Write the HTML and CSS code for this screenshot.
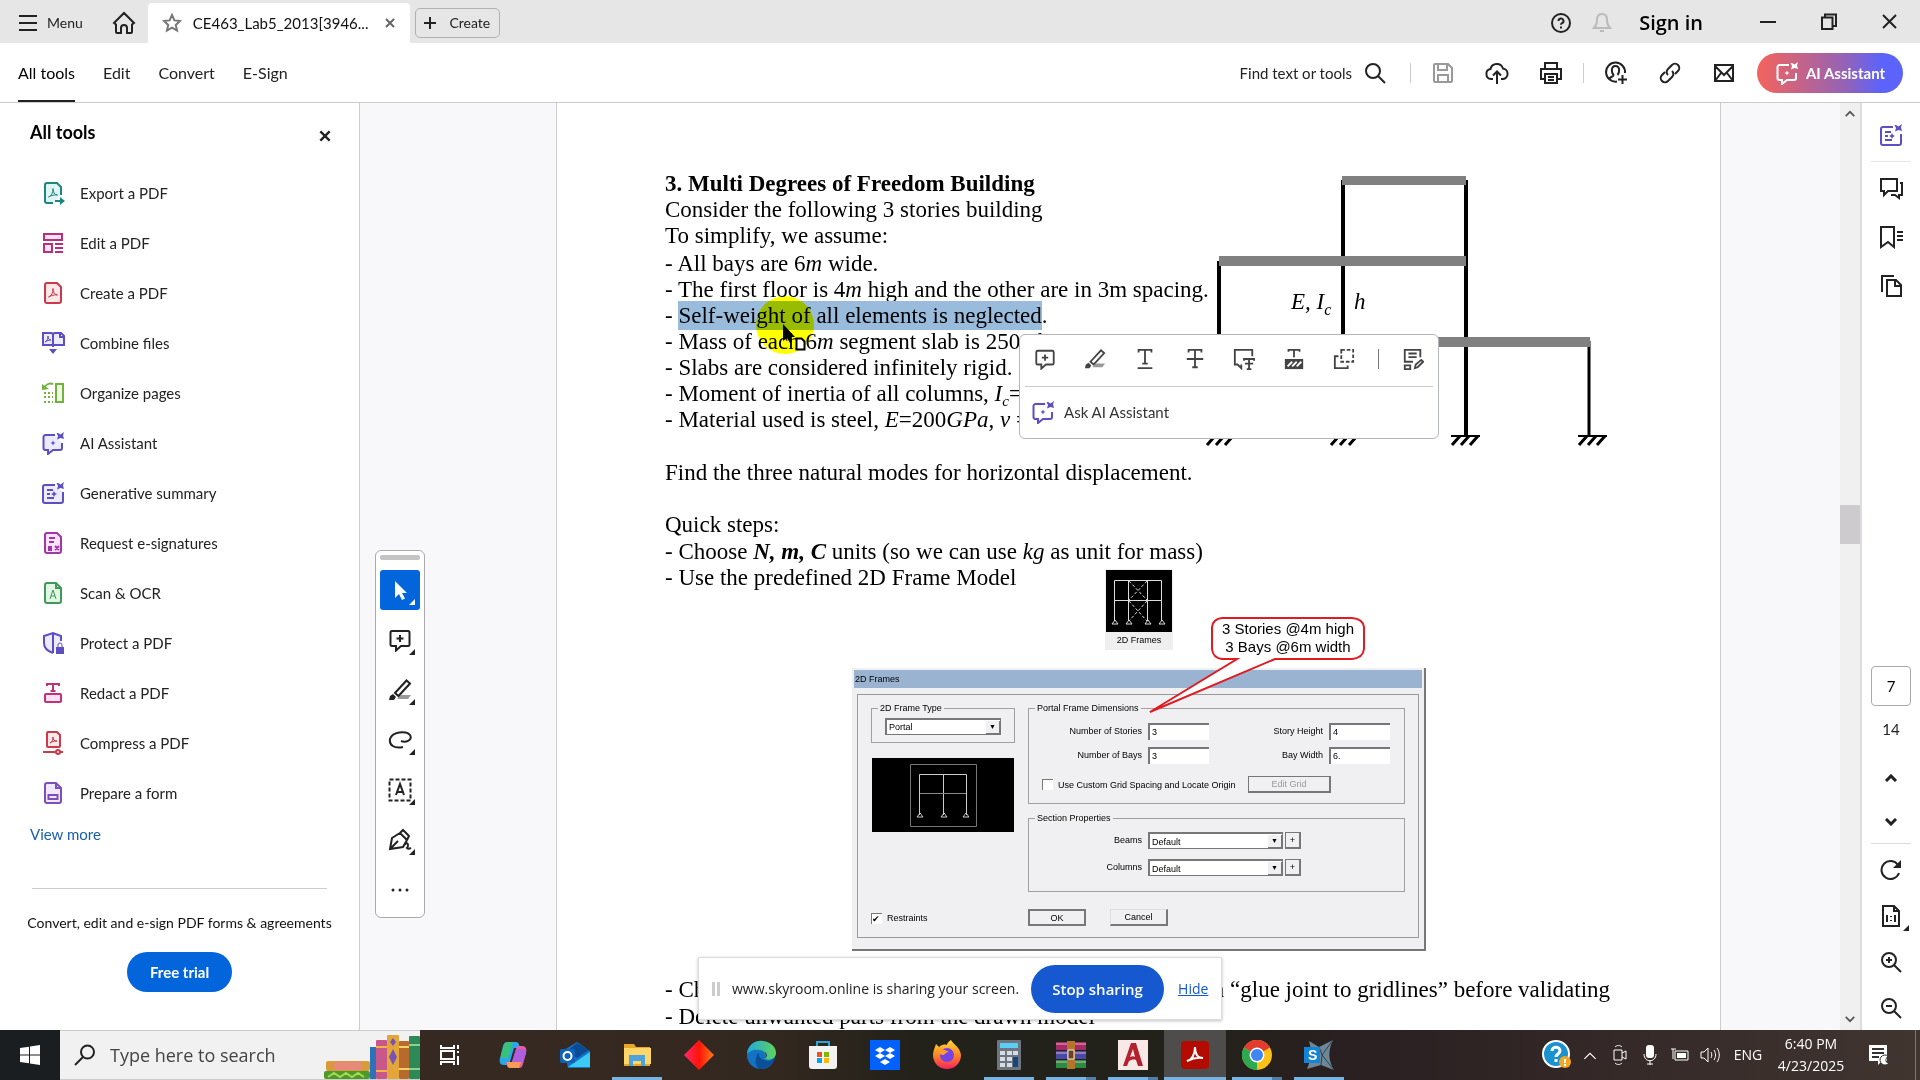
FILE: index.html
```
<!DOCTYPE html>
<html lang="en">
<head>
    <meta charset="UTF-8">
    <meta name="viewport" content="width=device-width, initial-scale=1.0">
    <title>CE463_Lab5_2013</title>
    <link rel="stylesheet" href="styles.css">
</head>
<body>
<!-- Shared icons -->
<svg class="sprite" aria-hidden="true">
    <symbol id="i-ai" viewBox="0 0 24 24"><path d="M14 4H4.500a2 2 0 0 0-2 2v11a2 2 0 0 0 2 2H7v4l5-4h7a2 2 0 0 0 2-2v-5" /><path class="solid" d="m17 2 2.500 1.500L23 1l-1 3.500L23 8l-3.500-1L16 8.500 17 5l-1.500-3zM12 9.500l.8 1.700 1.700.8-1.700.8-.8 1.700-.8-1.700-1.700-.8 1.700-.8z"/></symbol>
    <symbol id="i-summary" viewBox="0 0 24 24"><path d="M14 4H4a2 2 0 0 0-2 2v14a2 2 0 0 0 2 2h16a2 2 0 0 0 2-2v-9M6 9h6M6 13h3M6 17h7"/><path class="solid" d="m17 2 2.500 1.500L23 1l-1 3.500L23 8l-3.500-1L16 8.500 17 5l-1.500-3zM13 10l1 2 2 1-2 1-1 2-1-2-2-1 2-1z"/></symbol>
    <symbol id="i-comment" viewBox="0 0 24 24"><path d="M4 3h16a1.500 1.500 0 0 1 1.500 1.500v12A1.500 1.500 0 0 1 20 18h-7l-5 4.500V18H4a1.500 1.500 0 0 1-1.500-1.500v-12A1.500 1.500 0 0 1 4 3zM12 7v7M8.500 10.500h7"/></symbol>
    <symbol id="i-marker" viewBox="0 0 24 24"><path class="shade" d="M9 21l4-4h10l-3 4z"/><path d="M7 15 18.500 2.500l3.500 3L10.500 18z"/><path class="solid" d="M1 22l1-4 3-2 3 3-2 3z"/></symbol>
    <symbol id="i-pdf" viewBox="0 0 24 24"><path d="M6 2h10l4 4v14a2 2 0 0 1-2 2H6a2 2 0 0 1-2-2V4a2 2 0 0 1 2-2z"/><path class="thin" d="M7.500 16c3-1 4.500-4 4.500-8.500 0 4 1.500 6 4.500 6.500-3-.5-6 .3-9 2z"/></symbol>
    <symbol id="i-x" viewBox="0 0 12 12"><path d="M2 2l8 8M10 2l-8 8"/></symbol>
    <symbol id="i-up" viewBox="0 0 14 8"><path d="M2 7l5-5 5 5"/></symbol>
    <symbol id="i-down" viewBox="0 0 14 8"><path d="M2 1l5 5 5-5"/></symbol>
</svg>

<header class="titlebar">
    <button class="menu-btn"><svg class="ico" viewBox="0 0 20 20"><path d="M1 3h18M1 10h18M1 17h18"/></svg>Menu</button>
    <button class="home-btn" aria-label="Home"><svg class="ico ico-24" viewBox="0 0 24 24"><path d="M2 12 12 2l10 10-2 1.500V21a1 1 0 0 1-1 1h-4v-5a3 3 0 0 0-6 0v5H5a1 1 0 0 1-1-1v-7.500z"/></svg></button>
    <div class="tab">
        <svg class="ico ico-20 star" viewBox="0 0 20 20"><path d="m10 2 2.400 5.400 5.600.6-4.200 3.900 1.200 5.600-5-2.900-5 2.900 1.200-5.600L2 8l5.600-.6z"/></svg>
        <span class="tab-name">CE463_Lab5_2013[3946...</span>
        <button class="tab-close" aria-label="Close tab"><svg class="ico ico-12"><use href="#i-x"/></svg></button>
    </div>
    <button class="create-btn"><svg class="ico ico-12" viewBox="0 0 12 12"><path d="M6 0v12M0 6h12"/></svg>Create</button>
    <div class="title-right">
        <button aria-label="Help"><svg class="ico ico-20" viewBox="0 0 20 20"><circle cx="10" cy="10" r="9"/><path d="M7.500 8a2.500 2.500 0 1 1 3.500 2.200c-.7.300-1 .7-1 1.500M10 13.500v2"/></svg></button>
        <button class="bell" aria-label="Notifications"><svg class="ico ico-20" viewBox="0 0 20 20"><path d="M10 1C6 1 5 4 5 7c0 4-1 6-3 8h16c-2-2-3-4-3-8 0-3-1-6-5-6zM8 18h4"/></svg></button>
        <button class="sign-in">Sign in</button>
        <button class="win" aria-label="Minimize"><svg class="ico ico-18" viewBox="0 0 18 18"><path d="M1 9h16"/></svg></button>
        <button class="win" aria-label="Restore"><svg class="ico ico-18" viewBox="0 0 18 18"><path d="M5 4V1.500h11V13h-3M2 4.500h10.500V16H2z"/></svg></button>
        <button class="win" aria-label="Close"><svg class="ico ico-18" viewBox="0 0 18 18"><path d="M2 2l13 13M15 2 2 15"/></svg></button>
    </div>
</header>

<nav class="toolbar">
    <a class="active" href="#">All tools</a>
    <a href="#">Edit</a>
    <a href="#">Convert</a>
    <a href="#">E-Sign</a>
    <div class="toolbar-right">
        <button class="find-btn">Find text or tools<svg class="ico ico-22" viewBox="0 0 22 22"><circle cx="9" cy="9" r="7"/><path d="m14 14 7 7"/></svg></button>
        <span class="sep"></span>
        <button class="tool muted" aria-label="Save"><svg class="ico ico-22" viewBox="0 0 22 22"><path d="M3 2h13l4 4v13a1 1 0 0 1-1 1H3a1 1 0 0 1-1-1V3a1 1 0 0 1 1-1zM6 2v6h9V2M6 20v-7h10v7"/></svg></button>
        <button class="tool" aria-label="Upload"><svg class="ico ico-24" viewBox="0 0 24 24"><path d="M8 18H6a5 5 0 0 1-.5-9.900A6.500 6.500 0 0 1 18 7.500 5.300 5.300 0 0 1 18 18h-2M12 23V11M8 14.500l4-4 4 4"/></svg></button>
        <button class="tool" aria-label="Print"><svg class="ico ico-24" viewBox="0 0 24 24"><path d="M6 7V2h12v5M6 18H2V8h20v10h-4M6 13h12v9H6zM9 16h6M9 19h6"/></svg></button>
        <span class="sep"></span>
        <button class="tool" aria-label="Share"><svg class="ico ico-24" viewBox="0 0 24 24"><path d="M13 20.500A9.500 9.500 0 1 1 21 12M5.500 18c.5-2.500 4-2 4-4-2-2-3-9 2-9s4 7 2 9M18.500 14v9M14 18.500h9"/></svg></button>
        <button class="tool" aria-label="Copy link"><svg class="ico ico-22" viewBox="0 0 22 22"><path d="M9 13a4 4 0 0 1 0-6l4-4a4 4 0 0 1 6 6l-3 3M13 9a4 4 0 0 1 0 6l-4 4a4 4 0 0 1-6-6l3-3"/></svg></button>
        <button class="tool" aria-label="Email"><svg class="ico ico-22" viewBox="0 0 22 22"><path d="M2 3h18v16H2zM2 4l9 9 9-9M2 19l6-8M20 19l-6-8"/></svg></button>
        <button class="ai-btn"><svg class="ico ico-24"><use href="#i-ai"/></svg>AI Assistant</button>
    </div>
</nav>

<main>
    <aside class="panel">
        <div class="panel-head">
            <h2>All tools</h2>
            <button aria-label="Close panel"><svg class="ico ico-14"><use href="#i-x"/></svg></button>
        </div>
        <ul class="tools">
            <li><a href="#"><svg class="ico ico-24 teal" viewBox="0 0 24 24"><path d="M12 22H6a2 2 0 0 1-2-2V4a2 2 0 0 1 2-2h10l4 4v8M14 20h8"/><path class="solid" d="m19 16 5 4-5 4z"/><path class="thin" d="M7.500 16c3-1 4.500-4 4.500-8.500 0 4 1.500 6 4.500 6.500-3-.5-6 .3-9 2z"/></svg>Export a PDF</a></li>
            <li><a href="#"><svg class="ico ico-24 pink" viewBox="0 0 24 24"><path d="M3 3h18v6H3zM3 13h8v8H3z"/><path class="nofill" d="M14 13h8M14 17h8M14 21h8"/></svg>Edit a PDF</a></li>
            <li><a href="#"><svg class="ico ico-24 red"><use href="#i-pdf"/></svg>Create a PDF</a></li>
            <li><a href="#"><svg class="ico ico-24 indigo" viewBox="0 0 24 24"><path d="M12 16V4a2 2 0 0 0-2-2H2v12h10M12 4a2 2 0 0 1 2-2h6l3 3v9H12M19 2v4h4"/><path class="solid" d="m8 18 4 5 4-5z"/><path class="thin" d="M4 11c2-1 3-3 3-6 0 3 1 4 3 4-2 0-4 .5-6 2z"/></svg>Combine files</a></li>
            <li><a href="#"><svg class="ico ico-24 green" viewBox="0 0 24 24"><path d="M15 3h7v18h-7z"/><path class="nofill" d="M3 7c2-4 6-5 9-4"/><path class="solid" d="M1 3l7 5-7 1z"/><path class="nofill dotted" d="M3 12h9M3 16h9M3 21h9"/></svg>Organize pages</a></li>
            <li><a href="#"><svg class="ico ico-24 indigo"><use href="#i-ai"/></svg>AI Assistant</a></li>
            <li><a href="#"><svg class="ico ico-24 indigo"><use href="#i-summary"/></svg>Generative summary</a></li>
            <li><a href="#"><svg class="ico ico-24 magenta" viewBox="0 0 24 24"><path d="M6 2h10l4 4v14a2 2 0 0 1-2 2H6a2 2 0 0 1-2-2V4a2 2 0 0 1 2-2z"/><path class="nofill" d="M8 7h6M8 11h5M14 15l4 4M18 15l-4 4M8 15v4h2v-4"/></svg>Request e-signatures</a></li>
            <li><a href="#"><svg class="ico ico-24 leaf" viewBox="0 0 24 24"><path d="M6 2h9l5 5v13a2 2 0 0 1-2 2H6a2 2 0 0 1-2-2V4a2 2 0 0 1 2-2zM15 2v5h5"/><path class="thin" d="m9 18 3-9 3 9M10 15h4"/></svg>Scan &amp; OCR</a></li>
            <li><a href="#"><svg class="ico ico-24 indigo" viewBox="0 0 24 24"><path d="M12 22c-6-2-9-6-9-10V5l9-3 8 3v5M12 2v20"/><path class="solid" d="M15 16h8v7h-8z"/><path class="nofill thin" d="M17 16v-2a2 2 0 0 1 4 0v2"/></svg>Protect a PDF</a></li>
            <li><a href="#"><svg class="ico ico-24 rose" viewBox="0 0 24 24"><path d="M5 13h14a1 1 0 0 1 1 1v6a1 1 0 0 1-1 1H5a1 1 0 0 1-1-1v-6a1 1 0 0 1 1-1z"/><path class="nofill" d="M6 5V3h12v2M12 3v7M9.500 10h5"/></svg>Redact a PDF</a></li>
            <li><a href="#"><svg class="ico ico-24 red" viewBox="0 0 24 24"><path d="M7 1h9l3 3v11a1 1 0 0 1-1 1H7a1 1 0 0 1-1-1V2a1 1 0 0 1 1-1z"/><path class="thin" d="M9 12c2-1 3-3 3-6 0 3 1 4 4 4-3 0-5 .5-7 2z"/><path class="nofill" d="M2 21h20"/><circle cx="17" cy="21" r="2"/></svg>Compress a PDF</a></li>
            <li><a href="#"><svg class="ico ico-24 violet" viewBox="0 0 24 24"><path d="M6 2h9l5 5v13a2 2 0 0 1-2 2H6a2 2 0 0 1-2-2V4a2 2 0 0 1 2-2zM15 2v5h5M7.500 14h9v4h-9z"/></svg>Prepare a form</a></li>
        </ul>
        <a class="view-more" href="#">View more</a>
        <div class="trial">
            <p>Convert, edit and e-sign PDF forms &amp; agreements</p>
            <button>Free trial</button>
        </div>
    </aside>

    <section class="viewer">
        <article class="page">
            <div class="intro">
                <div class="intro-text">
                    <h1>3. Multi Degrees of Freedom Building</h1>
                    <p>Consider the following 3 stories building</p>
                    <p>To simplify, we assume:</p>
                    <ul class="dashes">
                        <li>All bays are 6<i>m</i> wide.</li>
                        <li>The first floor is 4<i>m</i> high and the other are in 3m spacing.</li>
                        <li><mark>Self-weight of all elements is neglected</mark>.</li>
                        <li>Mass of each 6<i>m</i> segment slab is 2500 kg.</li>
                        <li>Slabs are considered infinitely rigid.</li>
                        <li>Moment of inertia of all columns, <i>I<sub>c</sub></i>=</li>
                        <li>Material used is steel, <i>E</i>=200<i>GPa</i>, <i>v</i> =</li>
                    </ul>
                    <p class="find">Find the three natural modes for horizontal displacement.</p>
                </div>
                <!-- Three storey frame -->
                <svg class="building" width="410" height="290" viewBox="0 0 410 290">
                    <g stroke="#000" stroke-width="4">
                        <path d="M16 91v175M140 10v256M263 10v256"/><path stroke-width="3" d="M386 171v95"/>
                    </g>
                    <g fill="#808080">
                        <path d="M139 6h124v9H139zM16 86h247v10H16zM139 167h248v10H139z"/>
                    </g>
                    <g stroke="#000" stroke-width="2">
                        <path d="M2 266h29M125 266h29M248 266h29M375 266h29"/>
                        <path stroke-width="3" d="M4 275l8-9M13 275l8-9M22 275l8-9M128 275l8-9M137 275l8-9M146 275l8-9M249 275l8-9M258 275l8-9M267 275l8-9M376 275l8-9M385 275l8-9M394 275l8-9"/>
                    </g>
                    <text x="88" y="139">E, I<tspan dy="6" font-size="16">c</tspan></text>
                    <text x="151" y="139">h</text>
                </svg>
            </div>

            <p>Quick steps:</p>
            <ul class="dashes steps">
                <li>Choose <b><i>N, m, C</i></b> units (so we can use <i>kg</i> as unit for mass)</li>
                <li>Use the predefined 2D Frame Model</li>
            </ul>

            <figure class="thumb">
                <svg width="66" height="62" viewBox="0 0 66 62">
                    <rect width="66" height="62" fill="#000"/>
                    <g fill="none" stroke="#ddd">
                        <path d="M8.500 51V10.500h47V51M22.500 10v41M41.500 10v41M8 30.500h48"/>
                        <path stroke-dasharray="3 2" d="m23 11 18 19M41 11 23 30M23 31l18 20M41 31 23 51"/>
                        <path d="M6 54h6l-3-4zM20 54h6l-3-4zM39 54h6l-3-4zM53 54h6l-3-4z"/>
                    </g>
                </svg>
                <figcaption>2D Frames</figcaption>
            </figure>

            <div class="dialog-wrap">
                <form class="dialog">
                    <div class="dialog-title">2D Frames</div>
                    <div class="dialog-body">
                        <div class="col-left">
                            <fieldset class="frame-type">
                                <legend>2D Frame Type</legend>
                                <span class="combo"><select aria-label="2D Frame Type"><option>Portal</option></select></span>
                            </fieldset>
                            <svg class="preview" width="142" height="74" viewBox="0 0 142 74">
                                <rect width="142" height="74" fill="#000"/>
                                <g fill="none" stroke="#ccc"><path stroke="#777" d="M38.500 6.500h66v62h-66z"/><path d="M47.500 57V16.500h47V57M71.500 16v41M45 59h6l-3-4zM69 59h6l-3-4zM91 59h6l-3-4z"/><path stroke="#888" d="M48 35.500h46"/></g>
                            </svg>
                            <label class="check restraints"><input type="checkbox" checked>Restraints</label>
                        </div>
                        <div class="col-right">
                            <fieldset class="dims">
                                <legend>Portal Frame Dimensions</legend>
                                <div class="dims-grid">
                                    <label for="stories">Number of Stories</label><input id="stories" type="text" value="3">
                                    <label for="height">Story Height</label><input id="height" type="text" value="4">
                                    <label for="bays">Number of Bays</label><input id="bays" type="text" value="3">
                                    <label for="width">Bay Width</label><input id="width" type="text" value="6.">
                                </div>
                                <div class="custom-row">
                                    <label class="check"><input type="checkbox">Use Custom Grid Spacing and Locate Origin</label>
                                    <button type="button" disabled>Edit Grid</button>
                                </div>
                            </fieldset>
                            <fieldset class="sections">
                                <legend>Section Properties</legend>
                                <div class="section-grid">
                                    <label for="beams">Beams</label><span class="combo"><select id="beams"><option>Default</option></select></span><button type="button">+</button>
                                    <label for="columns">Columns</label><span class="combo"><select id="columns"><option>Default</option></select></span><button type="button">+</button>
                                </div>
                            </fieldset>
                            <div class="dialog-actions">
                                <button type="button" class="default">OK</button>
                                <button type="button">Cancel</button>
                            </div>
                        </div>
                    </div>
                </form>
                <div class="callout">
                    <svg width="218" height="96" viewBox="0 0 218 96"><path d="M74 1h130q11 1 12 9v22q-1 9-12 10h-77L2 95 89 42H74q-9-1-10-10V10q1-8 10-9z" fill="#fff" stroke="#e01b22" stroke-width="2"/></svg>
                    <p>3 Stories @4m high<br>3 Bays @6m width</p>
                </div>
            </div>

            <ul class="dashes after">
                <li class="glue"><span>Choose</span><span>in “glue joint to gridlines” before validating</span></li>
                <li>Delete unwanted parts from the drawn model</li>
            </ul>
        </article>

        <div class="spotlight"></div>
        <svg class="cursor" width="24" height="28" viewBox="0 0 24 28"><path d="M1 1v17l4-3 3 5 2-1-2-5h5z" fill="#000"/><path d="M14.500 15.500h5l3 3v8h-8z" fill="#fff" stroke="#000" stroke-width="2"/></svg>

        <!-- Floating quick tools -->
        <div class="quick">
            <span class="grip"></span>
            <button class="on" aria-label="Select"><svg class="ico ico-24" viewBox="0 0 24 24"><path class="solid" d="M7 3v17l4-4 3 6 3-1.500-3-5.500h5z"/></svg></button>
            <button aria-label="Comment"><svg class="ico ico-24"><use href="#i-comment"/></svg></button>
            <button aria-label="Highlight"><svg class="ico ico-24"><use href="#i-marker"/></svg></button>
            <button aria-label="Draw"><svg class="ico ico-24" viewBox="0 0 24 24"><path d="M15 19C6 21 1 17 2 11 4 4 18 2 22 7c3 5-4 8-9 6"/></svg></button>
            <button aria-label="Text box"><svg class="ico ico-24" viewBox="0 0 24 24"><path stroke-dasharray="4 2" d="M1.500 1.500h21v21h-21z"/><path d="m8 17 4-11 4 11M9.500 14h5"/></svg></button>
            <button aria-label="Sign"><svg class="ico ico-24" viewBox="0 0 24 24"><path d="M2 21 4 10l8-5 7 7-4 7zM2 21l8-8M12 5l3-3 6 6-2 4M15 19c5-8 6-1 4 1 1 1 2 1 4 0"/></svg></button>
            <button class="more" aria-label="More"><svg class="ico ico-18" viewBox="0 0 18 4"><g class="solid"><circle cx="2" cy="2" r="1.500"/><circle cx="9" cy="2" r="1.500"/><circle cx="16" cy="2" r="1.500"/></g></svg></button>
        </div>

        <!-- Selection popup -->
        <div class="popup">
            <div class="popup-row">
                <button aria-label="Comment"><svg class="ico ico-22"><use href="#i-comment"/></svg></button>
                <button aria-label="Highlight"><svg class="ico ico-22"><use href="#i-marker"/></svg></button>
                <button aria-label="Underline"><svg class="ico ico-22" viewBox="0 0 24 24"><path d="M5 5V2h14v3M12 2v15M9 17h6M4 22h16"/></svg></button>
                <button aria-label="Strikethrough"><svg class="ico ico-22" viewBox="0 0 24 24"><path d="M5 5V2h14v3M12 2v19M9 21h6M3 12h18"/></svg></button>
                <button aria-label="Replace text"><svg class="ico ico-22" viewBox="0 0 24 24"><path d="M9 18v4l-4-4H2V2h19v7M12 14v-2h11v2M17.500 12v11M15 23h5M13 17h9"/></svg></button>
                <button aria-label="Redact"><svg class="ico ico-22" viewBox="0 0 24 24"><path d="M6 4V2h12v2M12 2v8"/><path class="solid" d="M2 12h20v11H2z"/><path stroke="#fff" d="m5 20 5-5M10 20l5-5M15 20l5-5"/></svg></button>
                <button aria-label="Copy"><svg class="ico ico-22" viewBox="0 0 24 24"><path stroke-dasharray="4 2" d="M9 2h13v13H9z"/><path d="M6 9H2v13h14v-3"/></svg></button>
                <span class="sep"></span>
                <button aria-label="Edit text"><svg class="ico ico-22" viewBox="0 0 24 24"><path d="M12 15H3V2h17v8M7 6h9M7 10h9M3 19h6v4H3zM14 22l1-4 6-5 2 2-6 6z"/></svg></button>
            </div>
            <button class="ask"><svg class="ico ico-24 indigo"><use href="#i-ai"/></svg>Ask AI Assistant</button>
        </div>

        <!-- Screen sharing notice -->
        <div class="share">
            <span class="share-grip"></span>
            <span>www.skyroom.online is sharing your screen.</span>
            <button>Stop sharing</button>
            <a href="#">Hide</a>
        </div>
    </section>

    <div class="scrollbar">
        <svg class="ico" width="12" height="7"><use href="#i-up"/></svg>
        <span class="thumb-bar"></span>
        <svg class="ico" width="12" height="7"><use href="#i-down"/></svg>
    </div>

    <aside class="rail">
        <button class="indigo first" aria-label="Summary"><svg class="ico ico-24"><use href="#i-summary"/></svg></button>
        <button aria-label="Comments"><svg class="ico ico-24" viewBox="0 0 24 24"><path d="M2 3h16v12H9l-4 4v-4H2zM21 7h2v12h-3v3l-4-3h-4"/></svg></button>
        <button aria-label="Bookmarks"><svg class="ico ico-24" viewBox="0 0 24 24"><path d="M2 2h13v20l-6-5-7 5zM18 7h6M18 11h6M18 15h6"/></svg></button>
        <button aria-label="Pages"><svg class="ico ico-24" viewBox="0 0 24 24"><path d="M8 6h9l5 5v11H8zM16 6v6h6M3 18V2h12"/></svg></button>
        <div class="rail-bottom">
            <input type="text" value="7" aria-label="Page">
            <span class="total">14</span>
            <button aria-label="Previous page"><svg class="ico" width="14" height="8"><use href="#i-up"/></svg></button>
            <button class="next" aria-label="Next page"><svg class="ico" width="14" height="8"><use href="#i-down"/></svg></button>
            <button aria-label="Rotate"><svg class="ico ico-22" viewBox="0 0 22 22"><path d="M19 14a9 9 0 1 1-1-8"/><path class="solid" d="M21 1v8h-8z"/></svg></button>
            <button class="fit" aria-label="Actual size"><svg class="ico ico-22" viewBox="0 0 22 22"><path d="M3 1h11l5 5v15H3zM14 1v5h5M7 10v7M15 10v7M11 11v1M11 15v1"/></svg></button>
            <button aria-label="Zoom in"><svg class="ico ico-22" viewBox="0 0 22 22"><circle cx="9" cy="9" r="7"/><path d="m14 14 7 7M9 6v6M6 9h6"/></svg></button>
            <button aria-label="Zoom out"><svg class="ico ico-22" viewBox="0 0 22 22"><circle cx="9" cy="9" r="7"/><path d="m14 14 7 7M6 9h6"/></svg></button>
        </div>
    </aside>
</main>

<footer class="taskbar">
    <button class="start" aria-label="Start"><svg width="20" height="20" viewBox="0 0 20 20" fill="#fff"><path d="M0 3l9-1.300V9.500H0zM10 1.500 20 0v9.500H10zM0 10.500h9v7.800L0 17zM10 10.500h10V20l-10-1.500z"/></svg></button>
    <div class="search">
        <svg class="ico ico-22" viewBox="0 0 22 22"><circle cx="13.500" cy="8" r="6.500"/><path d="m9 13-8 8"/></svg>
        <input type="text" placeholder="Type here to search" aria-label="Search">
        <svg class="books" width="96" height="44" viewBox="0 0 96 44">
            <rect x="2" y="26" width="44" height="10" rx="2" fill="#d99a3c"/><rect x="10" y="27" width="28" height="8" rx="3" fill="#e88a7a"/>
            <rect x="0" y="36" width="46" height="8" rx="2" fill="#4c9a2e"/><path d="M4 42l6-4 6 4 6-4 6 4 6-4 6 4" fill="none" stroke="#a6d94e" stroke-width="2"/>
            <rect x="46" y="12" width="6" height="32" fill="#2c72b8"/>
            <rect x="52" y="5" width="11" height="39" rx="1" fill="#c8578a"/><path d="M52 12h11M52 36h11" stroke="#f0b34a" stroke-width="2"/>
            <rect x="63" y="0" width="12" height="44" rx="1" fill="#e2a63b"/><path d="m69 14 4 8-4 8-4-8z" fill="#7a52b3"/><path d="M69 3l3 4-3 4-3-4z" fill="#7a52b3"/>
            <rect x="75" y="6" width="10" height="38" rx="1" fill="#b86a2c"/><path d="M75 12h10M75 34h10" stroke="#f3d06a" stroke-width="2"/>
            <rect x="85" y="1" width="11" height="43" rx="1" fill="#2d8a57"/><path d="M85 10h11M85 34h11" stroke="#8fd08a" stroke-width="2"/>
        </svg>
    </div>
    <div class="apps">
        <button aria-label="Task view"><svg class="ico ico-22" viewBox="0 0 22 22"><path d="M1 1v3h13V1M1 21v-3h13v3M1 7h13v8H1zM18 1v4M18 12v9M18 7v2"/></svg></button>
        <button aria-label="Copilot"><svg width="30" height="28" viewBox="0 0 30 28"><path d="M9 1h9c3 0 3 3 4 6h-6l-5 17H6c-4 0-5-3-4-7L5 5c1-3 2-4 4-4z" fill="#2aa7e8"/><path d="M3 14 6 4c1-2 2-3 4-3h5l-5 16H3z" fill="#39c17a"/><path d="M21 27h-9c-3 0-3-3-4-6h6l5-16h5c4 0 5 3 4 7l-3 11c-1 3-2 4-4 4z" fill="#e65f9d"/><path d="M14 21l4-13h7c4 0 3 4 2 7l-2 6z" fill="#b05de0"/><path d="M9 21h14l-2 6h-9c-2 0-3-3-3-6z" fill="#f79a55"/></svg></button>
        <button aria-label="Outlook"><svg width="30" height="28" viewBox="0 0 30 28"><path d="M4 9 17 1l13 9v17H8z" fill="#1372c9"/><path d="m8 26 22-15v15H8z" fill="#3ccbf4"/><path d="M17 2 29 9 17 17 7 10z" fill="#0a4b94"/><rect y="8" width="15" height="14" rx="2" fill="#0f62b8"/><circle cx="7.500" cy="15" r="4" fill="none" stroke="#fff" stroke-width="2"/></svg></button>
        <button class="open" aria-label="File Explorer"><svg width="28" height="26" viewBox="0 0 28 26"><path d="M1 2h10l2 3h14v19H1z" fill="#e8a72b"/><path d="M1 6h27v16H1z" fill="#ffd667"/><path d="M6 13h16v11h-4v-5h-8v5H6z" fill="#4aa3df"/></svg></button>
        <button aria-label="Diamond"><svg width="30" height="30" viewBox="0 0 30 30"><defs><linearGradient id="dm"><stop offset="0" stop-color="#ff2a6d"/><stop offset=".5" stop-color="#ff1408"/><stop offset="1" stop-color="#ff7a1a"/></linearGradient></defs><path d="m15 0 15 15-15 15L0 15z" fill="url(#dm)"/></svg></button>
        <button aria-label="Edge"><svg width="30" height="30" viewBox="0 0 30 30"><defs><linearGradient id="eg"><stop offset="0" stop-color="#1fa7e0"/><stop offset="1" stop-color="#5fd45a"/></linearGradient></defs><circle cx="15" cy="15" r="14" fill="#1372c4"/><path d="M1 14C2 4 10 0 17 1c8 1 13 6 13 12 0 5-5 8-12 6 3-3 1-9-5-9-6-1-10 2-12 4z" fill="url(#eg)"/><path d="M18 19c4 2 8 1 11-1-2 6-8 11-15 11C9 28 8 17 13 12c-1 3 1 10 14 9z" fill="#0b4f98"/><path d="M18 19c3-2 2-7-1-8 5 2 5 6 1 8z" fill="#2e2622"/></svg></button>
        <button aria-label="Store"><svg width="30" height="30" viewBox="0 0 30 30"><path d="M9 7V2h12v5" fill="none" stroke="#2aa4df" stroke-width="2"/><path d="M1 6h28v20a3 3 0 0 1-3 3H4a3 3 0 0 1-3-3z" fill="#f2f2f2"/><path d="M9 12h5v5H9z" fill="#f25022"/><path d="M16 12h5v5h-5z" fill="#7fba00"/><path d="M9 18h5v5H9z" fill="#00a4ef"/><path d="M16 18h5v5h-5z" fill="#ffb900"/></svg></button>
        <button aria-label="Dropbox"><svg width="30" height="30" viewBox="0 0 30 30"><path d="M0 0h30v30H0z" fill="#0061fe"/><path d="m10 7 5 3-5 3-5-3zM20 7l5 3-5 3-5-3zM10 13l5 3-5 3-5-3zM20 13l5 3-5 3-5-3zM15 19l5 3-5 3-5-3z" fill="#fff"/></svg></button>
        <button aria-label="Firefox"><svg width="30" height="30" viewBox="0 0 30 30"><defs><linearGradient id="ff" x2="0" y2="1"><stop offset="0" stop-color="#ffd93b"/><stop offset=".5" stop-color="#ff8a24"/><stop offset="1" stop-color="#f5225f"/></linearGradient></defs><path d="M19 0c2 4 9 7 10 15 0 8-6 14-14 14S1 23 1 15C1 11 3 7 4 4l3 3c2-2 5-3 8-2 0-2 2-4 4-5z" fill="url(#ff)"/><circle cx="15" cy="15" r="7" fill="#7542e5"/><path d="M5 10c5-2 9 0 12 2-3 0-4 2-5 3-3 0-6-1-7-5z" fill="#ff9d2e"/></svg></button>
        <button class="open" aria-label="Calculator"><svg width="24" height="30" viewBox="0 0 24 30"><rect width="24" height="30" rx="1" fill="#6c7680"/><path d="M3 3h18v5H3z" fill="#5ccdf5"/><path d="M3 11h5v4H3zM10 11h5v4h-5zM16 11h5v4h-5zM3 17h5v4H3zM10 17h5v4h-5zM3 23h5v4H3zM10 23h5v4h-5z" fill="#d8dde2"/><path d="M16 17h5v10h-5z" fill="#17457d"/></svg></button>
        <button class="open many" aria-label="WinRAR"><svg width="30" height="28" viewBox="0 0 30 28"><path d="M0 1h30v8H0z" fill="#a82a62"/><path d="M0 10h30v8H0z" fill="#4b49a8"/><path d="M0 19h30v8H0z" fill="#2d8b3d"/><path d="M0 3h30M0 12h30M0 21h30" stroke="#d7b5c9"/><path d="M11 0h8v28h-8z" fill="#b47429"/><path d="M12 9h6v9h-6z" fill="#6b4322" stroke="#eee"/></svg></button>
        <button class="open many" aria-label="AutoCAD"><svg width="30" height="30" viewBox="0 0 30 30"><path d="M0 0h30v30H0z" fill="#f8e9e6"/><path d="m5 26 8-23h5l7 23h-5l-2-6c-3-1-5 0-7 1l-2 5zm7-9c2-1 4-1 5 0l-2-8z" fill="#b5202f"/></svg></button>
        <button class="open current" aria-label="Acrobat"><svg width="28" height="28" viewBox="0 0 28 28"><rect width="28" height="28" rx="4" fill="#b30b00"/><path d="M6 20c5-1 8-7 8-14 0 7 2 11 8 11-6-1-10 0-16 3z" fill="none" stroke="#fff" stroke-width="2"/></svg></button>
        <button class="open many" aria-label="Chrome"><svg width="30" height="30" viewBox="0 0 30 30"><circle cx="15" cy="15" r="15" fill="#fbc116"/><path d="M15 15 2 7.500a15 15 0 0 1 26 0z" fill="#e33b2e"/><path d="M15 15v15A15 15 0 0 1 2 7.500z" fill="#2da94f"/><circle cx="15" cy="15" r="7.500" fill="#fff"/><circle cx="15" cy="15" r="6" fill="#3f85f4"/></svg></button>
        <button class="open" aria-label="SAP"><svg width="30" height="30" viewBox="0 0 30 30"><path d="M5 1l10 6L29 0c-5 10-5 20 1 30l-13-5L3 29c4-9 5-18 2-28z" fill="#6d8797"/><path d="m15 7 3 8-1 10M29 0 18 15l12 15" fill="none" stroke="#2d4250"/><path d="M0 7h16v16H0z" fill="#1484d6"/><text x="4" y="20">S</text></svg></button>
    </div>
    <div class="tray">
        <span class="help"><svg width="30" height="30" viewBox="0 0 30 30"><circle cx="14" cy="14" r="13" fill="#1992cf" stroke="#fff" stroke-width="2"/><path d="M10 11c0-5 8-5 8 0 0 3-4 3-4 6M14 19v3" fill="none" stroke="#fff" stroke-width="3"/><circle cx="23" cy="22" r="6" fill="#f5a623"/><path d="M23 19v4M23 24v2" stroke="#fff" stroke-width="2"/></svg></span>
        <span><svg class="ico" width="16" height="9"><use href="#i-up"/></svg></span>
        <span><svg class="ico ico-20" viewBox="0 0 20 20"><path d="M4 5h8v10H4zM12 8l4-2v8l-4-2M5 2c2-2 5-2 7 0M5 18c2 2 5 2 7 0"/></svg></span>
        <span><svg class="ico ico-20" viewBox="0 0 20 20"><rect class="solid" x="6" y="0" width="8" height="13" rx="3"/><path d="M4 9c0 9 12 9 12 0M10 16v4M7 19h6"/></svg></span>
        <span><svg class="ico ico-20" viewBox="0 0 20 20"><path d="M5 6h13v9H5zM3 4v5M1 4h5M3 9v5"/><path class="solid" d="M7 8h9v5H7z"/></svg></span>
        <span><svg class="ico ico-20" viewBox="0 0 20 20"><path d="M1 7h3l4-4v14l-4-4H1zM11 7c1 2 1 4 0 6M14 5c2 3 2 7 0 10M17 3c3 4 3 10 0 14"/></svg></span>
        <span class="lang">ENG</span>
        <time>6:40 PM<br>4/23/2025</time>
        <button aria-label="Action center"><svg width="22" height="22" viewBox="0 0 22 22"><path d="M1 1h18v16h-5l-4 4v-4H1z" fill="#fff"/><path d="M4 5h12M4 9h12M4 13h7" stroke="#333" stroke-width="2"/><path d="M20 12a5 5 0 1 0 1 7c-4 0-4-4-1-7z" fill="#fff" stroke="#333"/></svg></button>
    </div>
</footer>
</body>
</html>
```
FILE: styles.css
```
* { box-sizing: border-box; }
html, body { height: 100%; }
body { margin: 0; display: flex; flex-direction: column; overflow: hidden; background: #fff; color: #222; font: 15px/20px Lato, "Open Sans", sans-serif; }
button { font: inherit; color: inherit; background: none; border: 0; padding: 0; cursor: pointer; display: flex; align-items: center; justify-content: center; white-space: nowrap; }
a { color: inherit; text-decoration: none; }
ul { list-style: none; margin: 0; padding: 0; }
h1, h2, p, figure { margin: 0; }

/* Icons */
.sprite { display: none; }
.ico { width: 20px; height: 20px; flex: none; fill: none; stroke: currentColor; stroke-width: 2; }
.ico[width="12"] { width: 12px; height: 7px; }
.ico[width="14"] { width: 14px; height: 8px; stroke-width: 3; }
.ico[width="16"] { width: 16px; height: 9px; }
.ico-12 { width: 12px; height: 12px; }
.ico-14 { width: 14px; height: 14px; }
.ico-18 { width: 18px; height: 18px; }
.ico-20 { width: 20px; height: 20px; }
.ico-22 { width: 22px; height: 22px; }
.ico-24 { width: 24px; height: 24px; }
.solid { fill: currentColor; stroke: none; }
.shade { fill: #999; stroke: none; }
.thin { stroke-width: 1; }
.nofill { fill: none; }
.dotted { stroke-dasharray: 2 2; }
.teal { color: #1f857f; fill: #e0f5f3; }
.pink { color: #b8307a; fill: #fde3f1; }
.red { color: #c83a4c; fill: #fde7e7; }
.indigo { color: #5c4fc4; fill: #eceaff; }
.green { color: #72b340; fill: #effae4; }
.magenta { color: #a137a8; fill: #fbe3fb; }
.leaf { color: #3f9a57; fill: #e2f6e6; }
.rose { color: #c2307a; fill: #fde3f1; }
.violet { color: #7b50bd; fill: #f2e8fd; }

/* Title bar */
.titlebar { flex: none; display: flex; height: 43px; background: #e6e6e6; padding-left: 18px; }
.menu-btn { gap: 9px; font-size: 14px; margin-right: 29px; padding-top: 2px; }
.home-btn { margin-right: 12px; padding-top: 2px; }
.tab { display: flex; align-items: center; width: 262px; margin-top: 3px; padding: 0 14px; background: #fff; border-radius: 4px 4px 0 0; }
.star { color: #777; }
.tab-name { flex: 1; margin-left: 11px; font-size: 15px; color: #111; white-space: nowrap; }
.tab-close { color: #666; }
.create-btn { gap: 13px; width: 85px; height: 30px; margin: 8px 0 0 5px; border: 1px solid #b1b1b1; border-radius: 5px; font-size: 14px; }
.title-right { display: flex; margin-left: auto; }
.title-right button { width: 41px; padding-top: 2px; }
.title-right .bell { color: #bbb; }
.title-right .sign-in { width: auto; margin: 0 34px 0 17px; font: 600 20px "Open Sans", sans-serif; color: #000; }
.title-right .win { width: 61px; padding: 0; }

/* Toolbar */
.toolbar { flex: none; display: flex; height: 60px; padding-left: 18px; border-bottom: 1px solid #ccc; gap: 28px; }
.toolbar > a { font-size: 16px; line-height: 59px; border-bottom: 2px solid transparent; }
.toolbar > .active { color: #000; border-color: #222; }
.toolbar-right { display: flex; align-items: center; margin-left: auto; padding-right: 17px; }
.find-btn { gap: 12px; margin-right: 19px; }
.sep { width: 1px; height: 20px; margin: 0 5px; background: #ccc; }
.tool { width: 54px; height: 40px; }
.muted { color: #999; }
.ai-btn { gap: 7px; width: 146px; height: 40px; margin-left: 6px; border-radius: 20px; color: #fff; font-size: 15px; font-weight: bold; background: linear-gradient(90deg, #f5635c, #9463b6 60%, #5c63fb 85%); }

main { flex: 1; display: flex; min-height: 0; }

/* Left panel */
.panel { flex: none; width: 360px; border-right: 1px solid #ccc; }
.panel-head { display: flex; align-items: center; justify-content: space-between; height: 65px; padding: 0 27px 7px 30px; }
.panel-head h2 { font-size: 18px; color: #000; }
.panel-head button { padding-top: 8px; }
.tools a { display: flex; align-items: center; gap: 15px; height: 50px; padding-left: 41px; }
.view-more { display: inline-block; margin-left: 30px; line-height: 32px; color: #1b5fae; }
.trial { margin: 38px 32px 0; padding-top: 24px; border-top: 1px solid #ccc; display: flex; flex-direction: column; align-items: center; }
.trial p { font-size: 14px; color: #111; white-space: nowrap; }
.trial button { width: 105px; height: 40px; margin-top: 19px; border-radius: 20px; background: #0265dc; color: #fff; font-weight: bold; }

/* Document */
.viewer { position: relative; flex: 1; min-width: 0; overflow: hidden; background: #f8f8fa; }
.page { min-height: 100%; margin: 0 119px 0 196px; padding: 67px 0 0 108px; border: 1px solid #ccc; border-width: 0 1px; background: #fff; color: #000; font: 23px/26px "Liberation Serif", "Times New Roman", serif; white-space: nowrap; }
.page h1 { font-size: 23px; line-height: 26px; }
.page sub { font-size: 15px; line-height: 0; vertical-align: -5px; }
.intro { display: flex; height: 315px; margin-bottom: 27px; }
.intro-text { flex: none; width: 538px; padding-top: 1px; }
.building { flex: none; }
.building text { font: italic 23px "Liberation Serif", serif; }
.dashes li::before { content: "- "; }
.intro .dashes { margin-top: 2px; }
mark { padding: 2px 0; background: #9abcdc; color: inherit; }
.find { margin-top: 27px; }
.steps { margin-top: 1px; }
.thumb { width: 68px; margin: -22px 0 0 440px; padding: 1px; background: #efefef; font: 9px/17px "Liberation Sans", Arial, sans-serif; text-align: center; }
.thumb svg { display: block; }
.dialog-wrap { position: relative; width: 574px; margin: 18px 0 0 187px; }

/* Old style dialog */
.dialog { padding: 2px; background: #f0eff1; border: solid #777; border-width: 0 2px 2px 0; font: 9px/12px "Liberation Sans", Arial, sans-serif; }
.dialog-title { padding: 3px 1px; background: #9ab3d1; }
.dialog-body { display: flex; gap: 13px; margin: 6px 3px 9px; padding: 7px 13px 11px 13px; border: 1px solid #999; }
.dialog fieldset { min-width: 0; margin: 0; padding: 0; border: 1px solid #a0a0a0; }
.dialog legend { margin-left: 6px; padding: 0 2px; line-height: 12px; }
.col-left { flex: none; display: flex; flex-direction: column; width: 144px; }
.col-right { flex: 1; min-width: 0; }
.combo { position: relative; display: block; height: 17px; border: 2px solid #777; border-width: 2px 1px 1px 2px; }
.combo::after { content: "▼"; position: absolute; top: 1px; right: 0; width: 13px; height: 12px; border: solid #777; border-width: 0 1px 1px 0; background: #f0eff1; font-size: 7px; line-height: 12px; text-align: center; pointer-events: none; }
.combo select { display: block; width: 100%; height: 14px; appearance: none; border: 0; padding: 0 2px; background: #fff; color: #000; font: inherit; }
.frame-type .combo { margin: 4px 13px 7px; }
.preview { margin: 15px 0 0 1px; }
.check { display: flex; align-items: center; }
.check input { appearance: none; width: 11px; height: 11px; margin: 0 5px 0 0; border: solid #777; border-width: 1px 0 0 1px; background: #fff; }
.check input:checked::before { content: "✔"; display: block; font-size: 9px; line-height: 10px; }
.restraints { margin: auto 0 2px; }
.dims-grid { display: grid; grid-template-columns: 113px 61px 108px 61px; gap: 7px 6px; padding-top: 9px; line-height: 17px; text-align: right; }
.dims-grid input { width: 61px; height: 17px; padding: 0 2px; border: solid #777; border-width: 2px 0 0 2px; background: #fff; font: inherit; }
.custom-row { display: flex; align-items: center; justify-content: space-between; margin: 12px 73px 10px 13px; }
.dialog button { height: 17px; border: solid #777; border-width: 1px 2px 2px 1px; background: #f0eff1; color: #000; }
.custom-row button:disabled { width: 83px; color: #999; }
.dialog .sections { margin-top: 8px; }
.section-grid { display: grid; grid-template-columns: 113px 139px 16px; gap: 10px 2px; padding: 8px 0 15px; line-height: 16px; text-align: right; }
.section-grid .combo { margin-left: 4px; }
.dialog-actions { display: flex; gap: 24px; margin-top: 17px; }
.dialog-actions button { width: 58px; border-color: #ddd #777 #777 #ddd; }
.dialog-actions .default { border: 2px solid #777; }
.callout { position: absolute; left: 296px; top: -51px; width: 218px; }
.callout svg { display: block; }
.callout p { position: absolute; left: 62px; right: 0; top: 3px; font: 15px/18px "Liberation Sans", Arial, sans-serif; text-align: center; }
.after { margin-top: 26px; }
.after li { margin-bottom: 1px; }
.glue span:last-child { display: inline-block; margin-left: 459px; }

/* Pointer */
.spotlight { position: absolute; left: 396px; top: 193px; width: 58px; height: 58px; border-radius: 50%; background: #ff0; mix-blend-mode: multiply; }
.cursor { position: absolute; left: 422px; top: 220px; }

/* Quick tools */
.quick { position: absolute; left: 15px; top: 447px; width: 50px; height: 368px; padding: 4px; border: 1px solid #aaa; border-radius: 6px; background: #fff; display: flex; flex-direction: column; gap: 10px; }
.grip { height: 5px; background: #c4c4c4; border-radius: 2px; }
.quick button { position: relative; height: 40px; border-radius: 3px; }
.quick button::after { content: ""; position: absolute; right: 5px; bottom: 5px; border: 3px solid; border-color: transparent currentColor currentColor transparent; }
.quick .on { background: #0265dc; color: #fff; }
.quick .more::after { display: none; }

/* Selection popup */
.popup { position: absolute; left: 659px; top: 231px; width: 420px; height: 105px; border: 1px solid #b5b5bd; border-radius: 6px; background: #fff; color: #444; }
.popup-row { display: flex; align-items: center; height: 51px; padding-bottom: 3px; }
.popup-row button { width: 50px; height: 48px; }
.popup-row .sep { margin: 0 9px; background: #777; }
.ask { width: 408px; height: 51px; margin: 0 5px; padding-left: 6px; gap: 9px; justify-content: flex-start; border-top: 1px solid #ccc; color: #333; }
.popup .indigo { fill: none; }

/* Sharing notice */
.share { position: absolute; left: 338px; bottom: 10px; width: 524px; height: 63px; padding-left: 13px; display: flex; align-items: center; background: #fff; border: 1px solid #ddd; box-shadow: 0 1px 3px rgba(0,0,0,0.25); font: 14px/20px "Open Sans", "Noto Sans", sans-serif; white-space: nowrap; }
.share-grip { width: 8px; height: 14px; margin-right: 12px; border: solid #ccc; border-width: 0 3px; }
.share button { width: 133px; height: 48px; margin: 0 14px 0 12px; border-radius: 24px; background: #1558d0; color: #fff; font-size: 15px; font-weight: 600; }
.share a { color: #1558d0; text-decoration: underline; }

/* Scrollbar and right rail */
.scrollbar { flex: none; display: flex; flex-direction: column; align-items: center; width: 20px; padding: 7px 0; background: #f0f0f1; color: #555; }
.thumb-bar { width: 20px; height: 39px; margin: 388px 0 auto; background: #cdcbcd; }
.rail { flex: none; display: flex; flex-direction: column; align-items: center; width: 60px; padding: 16px 0 6px; border-left: 2px solid #ddd; }
.rail button { position: relative; flex: none; width: 40px; height: 32px; margin-bottom: 17px; }
.rail .first { height: 43px; padding-bottom: 11px; border-bottom: 1px solid #e5e5e5; margin-bottom: 10px; }
.rail-bottom { display: flex; flex-direction: column; align-items: center; margin-top: auto; }
.rail input { width: 40px; height: 40px; border: 1px solid #aaa; border-radius: 4px; text-align: center; font: inherit; }
.total { margin: 13px 0 23px; }
.rail-bottom button { margin-bottom: 14px; }
.rail-bottom .total + button { margin-bottom: 12px; }
.rail-bottom .next { height: 38px; padding-bottom: 6px; margin-bottom: 10px; border-bottom: 1px solid #ddd; }
.rail-bottom button:last-child { margin: 0; }
.fit::after { content: ""; position: absolute; right: 2px; bottom: 1px; border: 3px solid; border-color: transparent currentColor currentColor transparent; }

/* Taskbar */
.taskbar { flex: none; display: flex; height: 50px; color: #fff; background: linear-gradient(90deg, #3a2b24, #33281f 40%, #22211a 48%, #23221a 62%, #2a1f21 70%, #40352f); font: 15px/22px "Open Sans", "Noto Sans", sans-serif; }
.start { width: 60px; background: #1b1e21; }
.search { display: flex; align-items: center; width: 360px; padding-left: 14px; border: 1px solid #ccc; border-width: 1px 0; background: #f1f1f1; color: #222; }
.search input { flex: 1; min-width: 0; margin-left: 14px; padding: 0; border: 0; background: none; font-size: 18px; font-family: inherit; }
.search input::placeholder { color: #444; opacity: 1; }
.books { flex: none; align-self: flex-end; }
.apps { display: flex; }
.apps button { width: 62px; position: relative; }
.apps text { font: bold 14px "Liberation Sans", sans-serif; fill: #fff; }
.open::after { content: ""; position: absolute; left: 6px; right: 6px; bottom: 0; height: 3px; background: #76b4e6; }
.many::after { border-right: 10px solid #4f7fa8; }
.current { background: #4e4d4b; }
.current::after { left: 0; right: 0; }
.tray { display: flex; align-items: center; margin-left: auto; border-right: 1px solid #777; margin-right: 4px; padding-right: 8px; }
.tray span { display: flex; justify-content: center; width: 30px; }
.tray .help { width: 36px; }
.tray .ico { stroke-width: 1; }
.tray .lang { width: 46px; font-size: 14px; }
.tray time { width: 80px; font-size: 14px; text-align: center; }
.tray button { width: 56px; }
```
